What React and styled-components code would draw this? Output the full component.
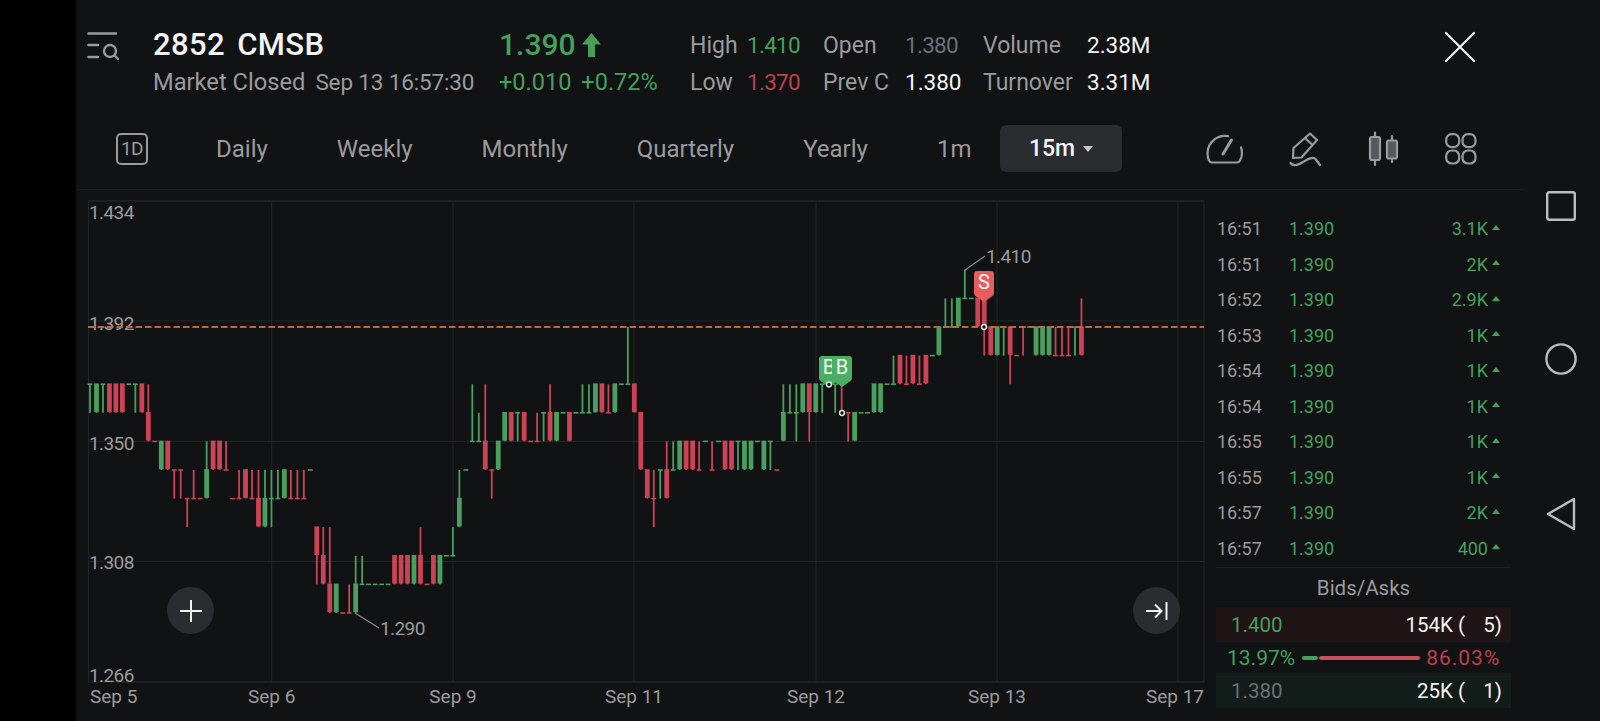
import React from "react";
import styled, { createGlobalStyle } from "styled-components";

const GREEN = "#46a05c";
const RED = "#bf3f4d";
const GRAY = "#9b9b9d";

const GlobalStyle = createGlobalStyle`
  html, body { margin: 0; padding: 0; background: #111214; }
  body { font-family: Roboto, "Liberation Sans", sans-serif; color: #f2f2f2; }
`;

// candle tokens: colour + bodyHi/bodyLo/wickHi/wickLo in price hundredths
const candles = `
g137/137/137/136 g137/136 g137/137/137/136 r137/136 r137/136 r137/136 g137 g137/137/137/136 r137/136 r136/135/137/135
r135 g135/134 r135/134 r134/134/134/133 r134/134/134/133 r133/133/133/132 r133/133/134/133 r133 g134/133/135/133 r135/134
r135/134 r134/134/135/134 r133 r133/133/134/133 r134/133 r133/133/134/133 r133/132/134/132 g133/132/134/132 g133/133/134/132 g133/133/134/133
g134/133 r133/133/134/133 r133/133/134/133 r133/133/134/133 g134 r132/131/132/130 r131/130/132/130 r130/129/132/129 g130/129 r129
r129/129/130/129 g130/129/131/129 g130/130/131/130 g130 g130 g130 g130 r131/130 r131/130 r131/130
g131/130 r131/130/132/130 r130 r131/130 g131/130 g131 g131/131/132/131 g133/132/134/132 g134 g135/135/137/135
g135/135/136/135 r135/134/137/134 r134/134/134/133 g135/134 g136/135 r136/135 g136/136/136/135 r136/135 r135 r135/135/136/135
g136/136/136/135 r136/135/137/135 g136/135 g136 r136/135 g136 g136/136/137/136 g136/136/137/136 g137/136 r137/136
r136/136/137/136 g137/136 g137 g137/137/139/137 r137/136 r136/134 r134/133 r133/133/134/132 g134/134/134/133 r134/133/135/133
g134/134/135/134 g135/134 r135/134 r135/134 r134/134/135/134 g135 r134/134/135/134 g135 r135/134 r135/134
g135/135/135/134 g135/134 g135/134 g135 g135/134 g135/135/135/134 r134 g136/135/137/135 g136/136/137/136 g136/136/137/135
g137/136 r137/136/137/135 g137/136 g137/137/137/136 g137 g137/137/137/136 r136/136/137/136 r136/136/136/135 g136/135 g136
g136 g137/136 g137/136 g137 g137/137/138/137 r138/137 r137/137/138/137 r138/137 r137/137/138/137 r138/137
g138 g139/138 g139/139/140/139 g139/139/140/139 g140/139 g140/140/141/140 g140 r140/139 r140/139/140/138 r139/138
g139/138 g139/139/139/138 r139/138/139/137 r138 r139/139/139/138 g139 g139/138 g139/138 g139/138 r138/138/139/138
r138/138/139/138 r138/138/139/138 g139/139/139/138 r139/138/140/138 g139
`.trim().split(/\s+/);

const priceY = (level) => 327 + (139 - level) * 28.6;
const slotX = (i) => 90 + 6.48 * i;

const parseCandle = (token) => {
  const [hi, lo = hi, wickHi = hi, wickLo = lo] = token.slice(1).split("/").map(Number);
  return { color: token[0] === "g" ? "#4a9e60" : "#cb4354", hi, lo, wickHi, wickLo };
};

const verticals = [271.7, 453, 634, 816, 997, 1178];
const horizontals = [201, 321, 441.5, 561.5, 682];
const yLabels = [["1.434", 212], ["1.392", 323], ["1.350", 442.5], ["1.308", 562], ["1.266", 674.5]];
const xLabels = [["Sep 5", 90, "start"], ["Sep 6", 271.7, "middle"], ["Sep 9", 453, "middle"], ["Sep 11", 634, "middle"], ["Sep 12", 816, "middle"], ["Sep 13", 997, "middle"], ["Sep 17", 1204, "end"]];

const ticks = [
  ["16:51", "3.1K"], ["16:51", "2K"], ["16:52", "2.9K"], ["16:53", "1K"], ["16:54", "1K"],
  ["16:54", "1K"], ["16:55", "1K"], ["16:55", "1K"], ["16:57", "2K"], ["16:57", "400"],
];

const Pin = ({ x, top, label, color }) => (
  <g>
    <path
      d={`M${x - 7} ${top}h14q3 0 3 3v19q0 2 -1.5 3l-8.5 6l-8.5 -6q-1.5 -1 -1.5 -3v-19q0 -3 3 -3z`}
      fill={color}
    />
    <PinText x={x} y={top + 18} textAnchor="middle">{label}</PinText>
  </g>
);

const Chart = () => (
  <ChartSvg viewBox="76 190 1132 531">
    <rect x="88.5" y="201" width="1115.5" height="481" fill="none" stroke="#222427" strokeWidth="1" />
    {horizontals.map((y) => <line key={y} x1="88" x2="1204" y1={y} y2={y} stroke="#222427" />)}
    {verticals.map((x) => <line key={x} x1={x} x2={x} y1="201" y2="682" stroke="#222427" />)}

    {yLabels.map(([text, y]) => <PriceLabel key={text} x="89" y={y + 7}>{text}</PriceLabel>)}
    {xLabels.map(([text, x, anchor]) => <AxisText key={text} x={x} y="703" textAnchor={anchor}>{text}</AxisText>)}

    {candles.map((token, i) => {
      const c = parseCandle(token);
      const x = slotX(i);
      const top = priceY(c.hi);
      return (
        <g key={i} fill={c.color}>
          <rect x={x - 0.9} width="1.8" y={priceY(c.wickHi)} height={priceY(c.wickLo) - priceY(c.wickHi)} />
          <rect x={x - 2.4} width="4.8" y={top - 0.8} height={Math.max(priceY(c.lo) - top, 1.6)} />
        </g>
      );
    })}

    <line x1="88" x2="1204" y1="327" y2="327" stroke="#b9693a" strokeWidth="1.8" strokeDasharray="6.5 3" />

    <polyline points="355,613 379,628" fill="none" stroke="#8b8b8d" strokeWidth="1.2" />
    <PriceLabel x="380" y="635">1.290</PriceLabel>
    <polyline points="965,271 965,270 985,256" fill="none" stroke="#8b8b8d" strokeWidth="1.2" />
    <PriceLabel x="986" y="263">1.410</PriceLabel>

    <Pin x={829} top={356} label="B" color="#4cae62" />
    <Pin x={842} top={356} label="B" color="#4cae62" />
    <Pin x={984} top={271} label="S" color="#e65d5d" />
    {[[829, 384.5], [842, 413], [984, 327]].map(([cx, cy]) => (
      <circle key={cx} cx={cx} cy={cy} r="2.4" fill="#111214" stroke="#d5e6dc" strokeWidth="1.5" />
    ))}
  </ChartSvg>
);

const MenuIcon = () => (
  <svg width="32" height="30" viewBox="0 0 32 30" fill="none" stroke="#9b9b9d" strokeWidth="2.4" strokeLinecap="round">
    <path d="M1.5 2.5H29M1.5 14H11M1.5 26H11" />
    <circle cx="23" cy="20" r="6" />
    <path d="M27.5 24.5L31 28" />
  </svg>
);

const GaugeIcon = () => (
  <svg width="38" height="32" viewBox="0 0 38 32" fill="none" stroke="#9b9b9d" strokeWidth="2.2" strokeLinecap="round">
    <path d="M22 3.2A17.5 17.5 0 0 0 1.5 20Q1.5 25 3 27.5Q4 29.5 6 29.5H31Q33 29.5 34 27.5Q36 24 36 20Q36 17 35 14.5" />
    <path d="M17 21L25.5 7" strokeWidth="3" />
  </svg>
);

const PenIcon = () => (
  <svg width="34" height="36" viewBox="0 0 34 36" fill="none" stroke="#9b9b9d" strokeWidth="2.2" strokeLinecap="round" strokeLinejoin="round">
    <path d="M4 27L4.5 17L21 2.5L28 9L12.5 26.5Z" />
    <path d="M16 7L23 13.5" />
    <path d="M1.5 32C4 35.5 9 34 14 31C19 28 24 25 26.5 28L31 34" />
  </svg>
);

const CandleIcon = () => (
  <svg width="32" height="36" viewBox="0 0 32 36" fill="#58595c" stroke="#9b9b9d" strokeWidth="2.2" strokeLinecap="round">
    <path d="M7 1.5V34M24 5V31" />
    <rect x="2" y="6" width="10" height="23" rx="2" />
    <rect x="19" y="9.5" width="10" height="18" rx="2" />
  </svg>
);

const GridIcon = () => (
  <svg width="32" height="32" viewBox="0 0 32 32" fill="none" stroke="#9b9b9d" strokeWidth="2.2">
    <rect x="1.2" y="1.2" width="13" height="13" rx="5.5" />
    <rect x="17.5" y="1.2" width="13" height="13" rx="5.5" />
    <rect x="1.2" y="17.5" width="13" height="13" rx="5.5" />
    <rect x="17.5" y="17.5" width="13" height="13" rx="5.5" />
  </svg>
);

const App = () => (
  <Screen>
    <GlobalStyle />
    <LeftBar />
    <Main>
      <Header>
        <MenuSlot><MenuIcon /></MenuSlot>
        <TitleBlock>
          <Title>2852 CMSB</Title>
          <SubTitle><MarketState>Market Closed</MarketState><span>Sep 13 16:57:30</span></SubTitle>
        </TitleBlock>
        <QuoteBlock>
          <Price>
            1.390
            <svg width="19" height="24" viewBox="0 0 19 24" fill={GREEN}>
              <path d="M9.5 0L19 11.5H13V24H6V11.5H0Z" />
            </svg>
          </Price>
          <Change><span>+0.010</span><span>+0.72%</span></Change>
        </QuoteBlock>
        <Stats>
          <StatLabel>High</StatLabel><StatValue $tone={GREEN}>1.410</StatValue>
          <StatLabel>Open</StatLabel><StatValue $tone="#6d7078">1.380</StatValue>
          <StatLabel>Volume</StatLabel><StatValue>2.38M</StatValue>
          <StatLabel>Low</StatLabel><StatValue $tone={RED}>1.370</StatValue>
          <StatLabel>Prev C</StatLabel><StatValue>1.380</StatValue>
          <StatLabel>Turnover</StatLabel><StatValue>3.31M</StatValue>
        </Stats>
        <CloseButton>
          <svg width="32" height="32" viewBox="0 0 32 32" stroke="#f2f2f2" strokeWidth="2.2" strokeLinecap="round">
            <path d="M2 2L30 30M30 2L2 30" />
          </svg>
        </CloseButton>
      </Header>

      <Toolbar>
        <DayBadge>1D</DayBadge>
        <Tabs>
          <Tab>Daily</Tab>
          <Tab>Weekly</Tab>
          <Tab>Monthly</Tab>
          <Tab>Quarterly</Tab>
          <Tab>Yearly</Tab>
          <Tab>1m</Tab>
          <ActiveTab>15m<Caret /></ActiveTab>
        </Tabs>
        <ToolIcons>
          <GaugeIcon />
          <PenIcon />
          <CandleIcon />
          <GridIcon />
        </ToolIcons>
      </Toolbar>

      <Body>
        <ChartPanel>
          <Chart />
          <ZoomButton $left={91}>
            <svg width="24" height="24" viewBox="0 0 24 24" stroke="#f2f2f2" strokeWidth="2">
              <path d="M12 1V23M1 12H23" />
            </svg>
          </ZoomButton>
          <ZoomButton $left={1057}>
            <svg width="24" height="24" viewBox="0 0 24 24" fill="none" stroke="#f2f2f2" strokeWidth="2">
              <path d="M1 12H16M10 5.5L16.5 12L10 18.5M21.5 3V21" />
            </svg>
          </ZoomButton>
        </ChartPanel>

        <SidePanel>
          <TickList>
            {ticks.map(([time, qty], i) => (
              <TickRow key={i}>
                <TickTime>{time}</TickTime>
                <TickPrice>1.390</TickPrice>
                <TickQty>{qty}<UpCaret /></TickQty>
              </TickRow>
            ))}
          </TickList>
          <BookTitle>Bids/Asks</BookTitle>
          <BookRow $bg="#1f1416">
            <BookPrice $tone={GREEN}>1.400</BookPrice>
            <BookSize><span>154K (</span><span>5)</span></BookSize>
          </BookRow>
          <RatioRow>
            <RatioText $tone={GREEN}>13.97%</RatioText>
            <RatioBar $tone={GREEN} $width={16} />
            <RatioBar $tone="#c8505c" $width={101} />
            <RatioText $tone={RED} $wide>86.03%</RatioText>
          </RatioRow>
          <BookRow $bg="#121c18">
            <BookPrice $tone="#6d7078">1.380</BookPrice>
            <BookSize><span>25K (</span><span>1)</span></BookSize>
          </BookRow>
        </SidePanel>
      </Body>
    </Main>

    <NavRail>
      <svg width="30" height="30" viewBox="0 0 30 30" fill="none" stroke="#bdbdbf" strokeWidth="2.4">
        <rect x="1.2" y="1.2" width="27.6" height="27.6" rx="2" />
      </svg>
      <svg width="32" height="32" viewBox="0 0 32 32" fill="none" stroke="#bdbdbf" strokeWidth="2.4">
        <circle cx="16" cy="16" r="14.6" />
      </svg>
      <svg width="30" height="34" viewBox="0 0 30 34" fill="none" stroke="#bdbdbf" strokeWidth="2.4" strokeLinejoin="round">
        <path d="M2 17L28 2V32Z" />
      </svg>
    </NavRail>
  </Screen>
);

const Screen = styled.div`
  display: flex;
  width: 1600px;
  height: 721px;
  overflow: hidden;
  background: #111214;
`;

const LeftBar = styled.div`
  width: 76px;
  flex: none;
  background: #000;
`;

const Main = styled.div`
  width: 1448px;
  flex: none;
  display: flex;
  flex-direction: column;
`;

const NavRail = styled.div`
  width: 76px;
  flex: none;
  box-sizing: border-box;
  padding: 191px 2px 190px 0;
  display: flex;
  flex-direction: column;
  align-items: center;
  justify-content: space-between;
`;

const Header = styled.header`
  height: 118px;
  display: flex;
  align-items: flex-start;
  padding: 27px 0 0 11px;
  box-sizing: border-box;
`;

const MenuSlot = styled.div`
  width: 66px;
  flex: none;
  padding-top: 4px;
`;

const TitleBlock = styled.div`
  width: 346px;
  flex: none;
`;

const Title = styled.div`
  font-size: 31px;
  line-height: 36px;
  font-weight: 500;
  letter-spacing: 0.4px;
  word-spacing: 4px;
  color: #f4f4f4;
`;

const SubTitle = styled.div`
  display: flex;
  align-items: baseline;
  gap: 10px;
  margin-top: 1px;
  font-size: 22.5px;
  line-height: 36px;
  letter-spacing: -0.15px;
  color: ${GRAY};
`;

const MarketState = styled.span`
  font-size: 23.7px;
  letter-spacing: 0;
`;

const QuoteBlock = styled.div`
  width: 191px;
  flex: none;
`;

const Price = styled.div`
  display: flex;
  align-items: center;
  gap: 6px;
  font-size: 30px;
  line-height: 36px;
  font-weight: 500;
  color: ${GREEN};
`;

const Change = styled.div`
  display: flex;
  gap: 10px;
  margin-top: 1px;
  font-size: 23.5px;
  line-height: 36px;
  color: ${GREEN};
`;

const Stats = styled.div`
  width: 480px;
  flex: none;
  display: grid;
  grid-template-columns: 57px 76px 82px 78px 104px 1fr;
  line-height: 37px;
`;

const StatLabel = styled.span`
  font-size: 23px;
  color: ${GRAY};
`;

const StatValue = styled.span`
  font-size: 22.5px;
  letter-spacing: ${({ $tone }) => ($tone ? "-0.7px" : "0")};
  color: ${({ $tone }) => $tone || "#f4f4f4"};
`;

const CloseButton = styled.div`
  margin-left: 274px;
  padding-top: 4px;
`;

const Toolbar = styled.div`
  height: 72px;
  display: flex;
  align-items: center;
  box-sizing: border-box;
  padding: 0 0 10px 40px;
  border-bottom: 1px solid #1b1c1f;
`;

const DayBadge = styled.div`
  width: 32px;
  height: 32px;
  box-sizing: border-box;
  display: flex;
  align-items: center;
  justify-content: center;
  border: 2.2px solid ${GRAY};
  border-radius: 5px;
  font-size: 19px;
  letter-spacing: -0.5px;
  color: ${GRAY};
`;

const Tabs = styled.div`
  display: flex;
  align-items: center;
  gap: 69px;
  margin-left: 68px;
`;

const Tab = styled.span`
  font-size: 24px;
  color: ${GRAY};
`;

const ActiveTab = styled.span`
  width: 122px;
  height: 47px;
  margin-left: -40.5px;
  display: flex;
  align-items: center;
  justify-content: center;
  gap: 8px;
  border-radius: 6px;
  background: #2b2c30;
  font-size: 23px;
  font-weight: 500;
  color: #f4f4f4;
`;

const Caret = styled.i`
  width: 0;
  height: 0;
  border-left: 5px solid transparent;
  border-right: 5px solid transparent;
  border-top: 6px solid #c8c8ca;
`;

const ToolIcons = styled.div`
  display: flex;
  align-items: center;
  gap: 45px;
  margin-left: 84px;
`;

const Body = styled.div`
  flex: 1;
  min-height: 0;
  display: flex;
`;

const ChartPanel = styled.div`
  position: relative;
  width: 1132px;
  flex: none;
`;

const ChartSvg = styled.svg`
  display: block;
  width: 1132px;
  height: 531px;
`;

const AxisText = styled.text`
  font-family: Roboto, "Liberation Sans", sans-serif;
  font-size: 19px;
  fill: #9b9b9d;
`;

const PriceLabel = styled(AxisText)`
  letter-spacing: -0.6px;
`;

const PinText = styled.text`
  font-family: Roboto, "Liberation Sans", sans-serif;
  font-size: 20px;
  fill: #f2f7f3;
`;

const ZoomButton = styled.div`
  position: absolute;
  left: ${({ $left }) => $left}px;
  top: 397px;
  width: 47px;
  height: 47px;
  border-radius: 50%;
  background: #2b2c30;
  display: flex;
  align-items: center;
  justify-content: center;
`;

const SidePanel = styled.aside`
  width: 295px;
  margin-left: 8px;
  flex: none;
  padding-top: 21px;
`;

const TickList = styled.div`
  border-bottom: 1px solid #1e1f22;
  padding-bottom: 1px;
`;

const TickRow = styled.div`
  display: grid;
  grid-template-columns: 72px 1fr auto;
  align-items: center;
  height: 35.5px;
  padding: 0 11px 0 1px;
  font-size: 18px;
`;

const TickTime = styled.span`
  color: ${GRAY};
`;

const TickPrice = styled.span`
  color: ${GREEN};
`;

const TickQty = styled.span`
  display: flex;
  align-items: center;
  gap: 4px;
  color: ${GREEN};
`;

const UpCaret = styled.i`
  width: 0;
  height: 0;
  margin-bottom: 3px;
  border-left: 4.5px solid transparent;
  border-right: 4.5px solid transparent;
  border-bottom: 5px solid ${GREEN};
`;

const BookTitle = styled.div`
  height: 39px;
  display: flex;
  align-items: center;
  justify-content: center;
  font-size: 20.5px;
  color: ${GRAY};
`;

const BookRow = styled.div`
  height: 35px;
  display: flex;
  align-items: center;
  justify-content: space-between;
  padding: 0 9px 0 15px;
  background: ${({ $bg }) => $bg};
  font-size: 20.5px;
`;

const BookPrice = styled.span`
  color: ${({ $tone }) => $tone};
`;

const BookSize = styled.span`
  display: grid;
  grid-template-columns: 65px 37px;
  text-align: right;
  color: #f4f4f4;
`;

const RatioRow = styled.div`
  height: 31px;
  display: flex;
  align-items: center;
  padding-left: 5px;
  gap: 1px;
`;

const RatioText = styled.span`
  font-size: 21px;
  margin: 0 6px 0 ${({ $wide }) => ($wide ? "5px" : "6px")};
  letter-spacing: ${({ $wide }) => ($wide ? "1px" : "0")};
  color: ${({ $tone }) => $tone};
`;

const RatioBar = styled.i`
  width: ${({ $width }) => $width}px;
  height: 4px;
  border-radius: 2px;
  background: ${({ $tone }) => $tone};
`;

export default App;
